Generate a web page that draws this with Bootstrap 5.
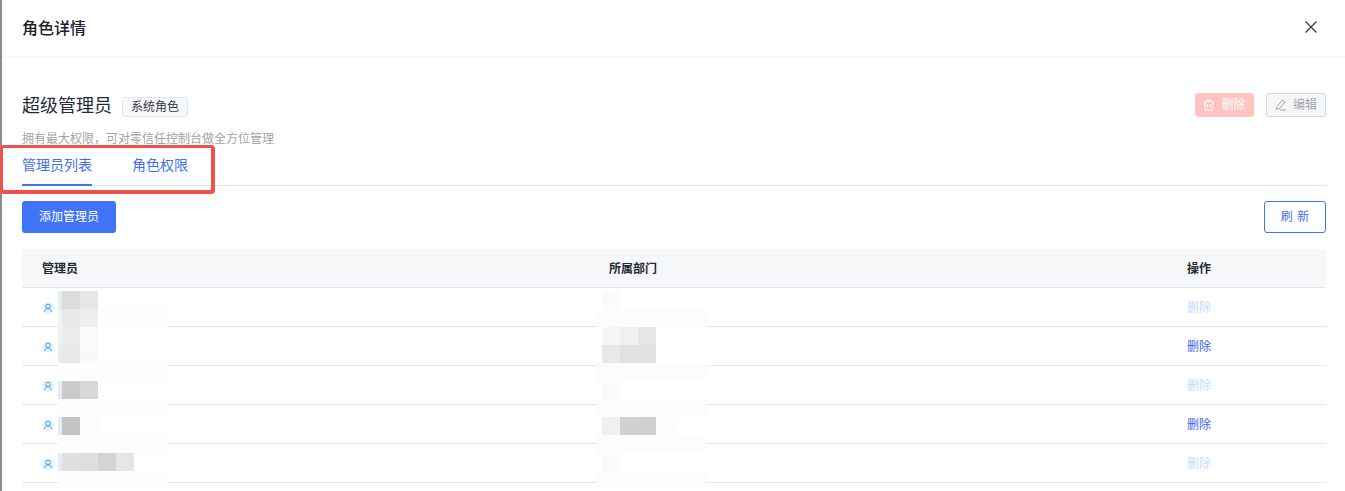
<!DOCTYPE html>
<html lang="zh-CN">
<head>
  <meta charset="UTF-8">
  <meta name="viewport" content="width=device-width, initial-scale=1.0">
  <title>角色详情</title>
  <link href="https://cdn.jsdelivr.net/npm/bootstrap@5.3.0/dist/css/bootstrap.min.css" rel="stylesheet">
  <style>
    html, body { height: 491px; overflow: hidden; }
    body {
      font-family: "Liberation Sans", "Noto Sans CJK SC", sans-serif;
      font-size: 12px;
      color: #1d2129;
      background: #fff;
    }
    .side-strip { width: 2px; background: #8c8c8c; }
    .drawer { position: relative; flex: 1; min-width: 0; }
    .drawer-head { height: 57px; padding: 0 20px; border-bottom: 1px solid #f5f6f8; }
    .drawer-title { font-size: 16px; font-weight: 500; margin: 2px 0 0; line-height: 24px; }
    .btn-close-x { border: 0; background: none; padding: 0; width: 14px; height: 14px; margin: 0 7px 2px 0; display: flex; }
    .drawer-body { padding: 36px 19px 0 20px; }
    .role-head { height: 26px; }
    .role-name { font-size: 18px; line-height: 26px; font-weight: 400; margin: 0; color: #252b36; }
    .role-tag { height: 20px; width: 66px; line-height: 18px; margin: 2px 0 0 10px; text-align: center; border: 1px solid #e1e4ea; border-radius: 3px; background: #f7f8fa; color: #333a46; }
    .act-btn { height: 24px; line-height: 22px; width: 60px; padding: 0; margin-bottom: 2px; font-size: 12px; border-radius: 3px; border: 1px solid; gap: 6px; }
    .act-del { background: #ffc4c0; border-color: #ffc4c0; color: #fff; width: 59px; }
    .act-edit { background: #f5f6f8; border-color: #d6d8dc; color: #a3a6ad; margin-left: 12px; }
    .role-desc { margin: 10px 0 0; line-height: 20px; color: #a0a3a9; }
    .tab-row { height: 37px; border-bottom: 1px solid #e3e5ec; gap: 40px; }
    .tab-item { font-size: 14px; line-height: 20px; color: #4170f5; height: 37px; padding: 6px 0 11px; border: 0; background: none; }
    .tab-item.on { border-bottom: 2px solid #3f72f6; margin-bottom: -1px; padding-bottom: 9px; }
    .tool-row { margin: 15px 0 16px; }
    .add-btn { width: 94px; height: 32px; padding: 0; font-size: 12px; background: #3f74f8; border: 0; border-radius: 3px; color: #fff; }
    .refresh-btn { width: 62px; height: 32px; padding: 0; font-size: 12px; background: #fff; border: 1px solid #3f74f8; border-radius: 3px; color: #4170f5; word-spacing: 1px; }
    .admin-table { table-layout: fixed; width: 1304px; margin: 0; font-size: 12px; }
    .admin-table th { height: 38px; padding: 2px 20px 0; background: #f6f7f9; border-bottom: 1px solid #e3e5ec; font-weight: 700; color: #262a32; vertical-align: middle; }
    .admin-table td { height: 39px; padding: 2px 20px 0; border-bottom: 1px solid #e3e5ec; vertical-align: middle; }
    .user-dot { width: 12px; height: 12px; border-radius: 50%; background: #e6f3ff; display: flex; }
    .del-link { color: #3b66ee; text-decoration: none; }
    .del-link.off { color: #c3daff; }
    .hl-box { position: absolute; left: -2px; top: 145px; width: 215px; height: 49px; border-style: solid; border-color: #f2504a; border-width: 3px 4px 4px 3px; border-radius: 4px; pointer-events: none; }
    .mosaic { position: absolute; top: 291px; display: grid; grid-auto-rows: 18px; pointer-events: none; }
    .mosaic-a { left: 56px; grid-template-columns: 4px repeat(5, 18px) 17px; }
    .mosaic-b { left: 594px; grid-template-columns: 6px repeat(5, 18px) 14px; }
  </style>
</head>
<body class="d-flex">
  <div class="side-strip flex-shrink-0"></div>
  <div class="drawer">
    <div class="drawer-head d-flex align-items-center justify-content-between">
      <h5 class="drawer-title">角色详情</h5>
      <button class="btn-close-x" type="button" aria-label="关闭">
        <svg width="14" height="14" viewBox="0 0 14 14" fill="none" stroke="#2b3a55" stroke-width="1.2"><path d="M1.5 1.5l11 11M12.5 1.5l-11 11"/></svg>
      </button>
    </div>

    <div class="drawer-body">
      <div class="role-head d-flex align-items-center">
        <h4 class="role-name">超级管理员</h4>
        <span class="role-tag">系统角色</span>
        <button class="btn act-btn act-del d-inline-flex align-items-center justify-content-center ms-auto" type="button">
          <svg width="12" height="12" viewBox="0 0 12 12" fill="none" stroke="#fff" stroke-width="1"><path d="M1 2.5h10M4.2 2.5V1h3.6v1.5M2.2 2.5v8.7h7.6V2.5M4.6 5v3.6M7.4 5v3.6"/></svg>
          删除
        </button>
        <button class="btn act-btn act-edit d-inline-flex align-items-center justify-content-center" type="button">
          <svg width="12" height="12" viewBox="0 0 12 12" fill="none" stroke="#a3a6ad" stroke-width="1"><path d="M7.5 1L10 3 4.5 9.5 1.5 10.5 2 7.5zM5 11h6"/></svg>
          编辑
        </button>
      </div>
      <p class="role-desc">拥有最大权限，可对零信任控制台做全方位管理</p>

      <div class="tab-row d-flex">
        <button class="tab-item on" type="button">管理员列表</button>
        <button class="tab-item" type="button">角色权限</button>
      </div>

      <div class="tool-row d-flex justify-content-between">
        <button class="btn add-btn" type="button">添加管理员</button>
        <button class="btn refresh-btn" type="button">刷 新</button>
      </div>

      <table class="table admin-table">
        <colgroup><col style="width:567px"><col style="width:578px"><col></colgroup>
        <thead>
          <tr><th>管理员</th><th>所属部门</th><th>操作</th></tr>
        </thead>
        <tbody id="admin-rows"></tbody>
      </table>
    </div>

    <div class="hl-box"></div>
    <div class="mosaic mosaic-a" id="mosaic-a"></div>
    <div class="mosaic mosaic-b" id="mosaic-b"></div>
  </div>

  <script>
    const rows = document.getElementById('admin-rows');
    [true, false, true, false, true].forEach(off => {
      const tr = document.createElement('tr');
      tr.innerHTML = `
        <td><span class="user-dot">
          <svg width="12" height="12" viewBox="0 0 12 12" fill="none" stroke="#3f9dfb" stroke-width="1"><circle cx="6" cy="4.4" r="2.3"/><path d="M2.6 10c0-2 1.5-3.2 3.4-3.2S9.4 8 9.4 10"/></svg>
        </span></td>
        <td></td>
        <td><a href="#" class="del-link ${off ? 'off' : ''}">删除</a></td>`;
      rows.appendChild(tr);
    });

    // blurred-out names: each row of tiles runs left to right, 18px tall
    const fff = '#fff';
    const pale = ['#fdfdfd', '#fdfdfd', '#fdfdfd', '#fdfdfd', '#fdfdfd', '#fdfdfd', '#fdfdfd'];
    const mosaicA = [
      ['#e4ecf4', '#dcdcdc', '#e6e7e6', fff, fff, fff, fff],
      ['#eef3f8', '#e8e8e8', '#eef0ef', '#fdfdfd', '#fdfdfd', '#fdfdfd', '#fdfdfd'],
      ['#eef3f8', '#ececec', '#fafbfa', fff, fff, fff, fff],
      ['#e4ecf4', '#e8e8e6', '#f8faf9', fff, fff, fff, fff],
      pale,
      ['#e4ecf4', '#cbcbcb', '#d8d8d8', fff, fff, fff, fff],
      pale,
      ['#e4ecf4', '#c4c4c4', '#fbfcfe', fff, fff, fff, fff],
      pale,
      ['#e4ecf4', '#e0e0e0', '#dedede', '#d4d4d4', '#e5e6e5', fff, fff],
      pale
    ];
    const pb = ['#fcfcfc', '#fcfcfc', '#fcfcfc', '#fcfcfc', '#fcfcfc', '#fcfcfc', '#fcfcfc'];
    const mosaicB = [
      [fff, '#fbfbfb', fff, fff, fff, fff, fff],
      pb,
      [fff, '#f6f6f6', '#f1f1f0', '#e6e6e6', fff, fff, fff],
      [fff, '#e8e8e8', '#e0e1e0', '#e0e1e0', fff, fff, fff],
      pb,
      [fff, '#fbfbfb', fff, fff, fff, fff, fff],
      pb,
      [fff, '#f0f0f0', '#d2d1d0', '#d0cfce', '#fbfcfe', fff, fff],
      pb,
      [fff, '#fbfbfb', fff, fff, fff, fff, fff],
      pb
    ];
    function fillMosaic(id, data) {
      const box = document.getElementById(id);
      data.flat().forEach(c => {
        const t = document.createElement('div');
        t.style.background = c;
        box.appendChild(t);
      });
    }
    fillMosaic('mosaic-a', mosaicA);
    fillMosaic('mosaic-b', mosaicB);
  </script>
  <script src="https://cdn.jsdelivr.net/npm/bootstrap@5.3.0/dist/js/bootstrap.bundle.min.js"></script>
</body>
</html>
